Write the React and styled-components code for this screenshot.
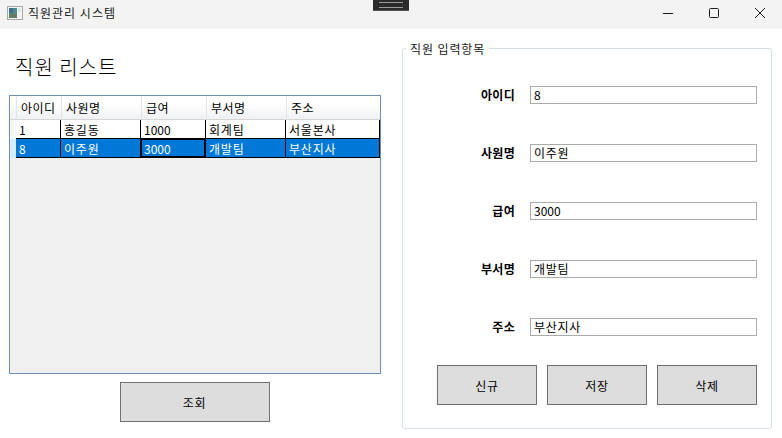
import React from "react";
import styled, { createGlobalStyle } from "styled-components";

const employees = [
  { id: "1", name: "홍길동", pay: "1000", dept: "회계팀", addr: "서울본사" },
  { id: "8", name: "이주원", pay: "3000", dept: "개발팀", addr: "부산지사" },
];
const columns = [
  { key: "id", label: "아이디", width: 45 },
  { key: "name", label: "사원명", width: 80 },
  { key: "pay", label: "급여", width: 65 },
  { key: "dept", label: "부서명", width: 80 },
  { key: "addr", label: "주소", width: 94 },
];
const selected = employees[1];
const formRows = [
  ["아이디", selected.id],
  ["사원명", selected.name],
  ["급여", selected.pay],
  ["부서명", selected.dept],
  ["주소", selected.addr],
];
const isNum = (v) => /^\d+$/.test(v);

const GlobalStyle = createGlobalStyle`
  html, body {
    margin: 0;
    padding: 0;
    background: #fff;
  }
  * {
    box-sizing: border-box;
  }
`;

const Win = styled.div`
  position: relative;
  width: 782px;
  height: 438px;
  overflow: hidden;
  background: #fff;
  color: #000;
  font-family: "Noto Sans CJK KR", "Noto Sans", sans-serif;
  font-size: 12px;
`;
const TitleBar = styled.div`
  display: flex;
  align-items: center;
  width: 783px;
  height: 29px;
  padding: 0 0 3px 7px;
  background: #f3f3f3;
`;
const AppIcon = styled.svg`
  width: 16px;
  height: 14px;
  margin-right: 5px;
`;
const TitleText = styled.span`
  flex: 1;
  font-size: 12px;
  line-height: 16px;
  letter-spacing: 1px;
  color: #1a1a1a;
`;
const WinButton = styled.div`
  display: flex;
  align-items: center;
  justify-content: center;
  width: 46px;
  height: 26px;
`;
const Notch = styled.div`
  position: absolute;
  left: 373px;
  top: 0;
  width: 36px;
  height: 11px;
  background: #2b2b2b;
  border-bottom: 1px solid #555;
  &::after {
    content: "";
    position: absolute;
    left: 6px;
    right: 6px;
    top: 2px;
    height: 4px;
    border-top: 1px solid #9a9a9a;
    border-bottom: 1px solid #9a9a9a;
  }
`;
const Body = styled.div`
  display: flex;
  padding: 19px 10px 9px 9px;
  height: 409px;
`;
const LeftPane = styled.div`
  display: flex;
  flex-direction: column;
  width: 372px;
  margin-right: 21px;
`;
const Heading = styled.h1`
  margin: 0 0 14px 6px;
  height: 33px;
  padding-top: 4px;
  font-size: 20px;
  line-height: 30px;
  font-weight: 300;
  letter-spacing: 1px;
`;
const Grid = styled.div`
  width: 372px;
  height: 279px;
  border: 1px solid #6d8fb4;
  background: #f0f0f0;
`;
const Row = styled.div`
  display: flex;
`;
const HeaderCorner = styled.div`
  width: 6px;
  height: 24px;
  background: linear-gradient(#fff, #f1f2f4);
  border-bottom: 1px solid #d5d5d5;
`;
const HeaderCell = styled.div`
  height: 24px;
  padding-left: 4px;
  line-height: 23px;
  letter-spacing: 0.5px;
  background: linear-gradient(#fff 30%, #f0f1f3);
  border-bottom: 1px solid #d5d5d5;
  border-left: 1px solid #e4e5e7;
`;
const RowHead = styled.div`
  width: 6px;
  height: 19px;
  background: ${(p) => (p.$active ? "#d9ebf9" : "#f5f6f8")};
`;
const Cell = styled.div`
  height: 19px;
  padding-left: 3px;
  line-height: 19px;
  white-space: nowrap;
  letter-spacing: ${(p) => (p.$num ? "0" : "0.8px")};
  background: ${(p) => (p.$selected ? "#0078d7" : "#fff")};
  color: ${(p) => (p.$selected ? "#fff" : "#000")};
  border-bottom: 1px solid #000;
  border-right: 1px solid #000;
  box-shadow: ${(p) => (p.$current ? "inset 0 0 0 1px #000" : "none")};
`;
const ActionButton = styled.button`
  display: block;
  flex: none;
  width: ${(p) => p.$w}px;
  height: 40px;
  padding: 0;
  background: #dddddd;
  border: 1px solid #707070;
  color: #000;
  font-family: inherit;
  font-size: 12px;
  letter-spacing: 0.6px;
`;
const QueryWrap = styled.div`
  display: flex;
  justify-content: center;
  margin-top: 8px;
  padding-right: 1px;
`;
const GroupBox = styled.div`
  position: relative;
  width: 370px;
  height: 381px;
  padding: 37px 13px 0 34px;
  border: 1px solid #d5dfe5;
  border-radius: 3px;
`;
const Legend = styled.div`
  position: absolute;
  left: 3px;
  top: -8px;
  padding: 0 4px;
  background: #fff;
  line-height: 15px;
  letter-spacing: 0.9px;
  color: #1a1a1a;
`;
const FormRow = styled.div`
  display: flex;
  align-items: center;
  height: 18px;
  margin-bottom: 40px;
`;
const Label = styled.label`
  width: 78px;
  margin-right: 15px;
  text-align: right;
  font-weight: 700;
  line-height: 18px;
  letter-spacing: 0.3px;
`;
const Input = styled.div`
  width: 227px;
  height: 18px;
  padding-left: 3px;
  border: 1px solid #ababab;
  line-height: 15px;
  letter-spacing: ${(p) => (p.$num ? "0" : "0.7px")};
`;
const ButtonRow = styled.div`
  display: flex;
  gap: 10px;
  margin-top: -11px;
`;

const App = () => {
  return (
    <Win>
      <GlobalStyle />
      <TitleBar>
        <AppIcon viewBox="0 0 16 14">
          <rect x="0.5" y="0.5" width="15" height="13" fill="#f4f4f4" stroke="#a8a8a8" />
          <rect x="2" y="2" width="8" height="10" fill="#4f8a8b" />
          <rect x="2" y="2" width="4" height="5" fill="#3f6f8f" />
          <rect x="2" y="8" width="8" height="4" fill="#5f7f5f" />
          <rect x="11" y="2" width="3" height="4" fill="#d8e8ec" />
        </AppIcon>
        <TitleText>직원관리 시스템</TitleText>
        <WinButton>
          <svg width="10" height="10" viewBox="0 0 10 10">
            <path d="M0 5.5h10" stroke="#1a1a1a" />
          </svg>
        </WinButton>
        <WinButton>
          <svg width="10" height="10" viewBox="0 0 10 10">
            <rect x="0.5" y="0.5" width="9" height="9" rx="1" fill="none" stroke="#1a1a1a" />
          </svg>
        </WinButton>
        <WinButton>
          <svg width="10" height="10" viewBox="0 0 10 10">
            <path d="M0 0l10 10M10 0L0 10" stroke="#1a1a1a" />
          </svg>
        </WinButton>
      </TitleBar>
      <Notch />
      <Body>
        <LeftPane>
          <Heading>직원 리스트</Heading>
          <Grid>
            <Row>
              <HeaderCorner />
              {columns.map((c) => (
                <HeaderCell key={c.key} style={{ width: c.width }}>
                  {c.label}
                </HeaderCell>
              ))}
            </Row>
            {employees.map((emp) => {
              const isSel = emp.id === selected.id;
              return (
                <Row key={emp.id}>
                  <RowHead $active={isSel} />
                  {columns.map((c) => (
                    <Cell
                      key={c.key}
                      style={{ width: c.width }}
                      $selected={isSel}
                      $current={isSel && c.key === "pay"}
                      $num={isNum(emp[c.key])}
                    >
                      {emp[c.key]}
                    </Cell>
                  ))}
                </Row>
              );
            })}
          </Grid>
          <QueryWrap>
            <ActionButton $w={150}>조회</ActionButton>
          </QueryWrap>
        </LeftPane>
        <GroupBox>
          <Legend>직원 입력항목</Legend>
          {formRows.map(([label, value]) => (
            <FormRow key={label}>
              <Label>{label}</Label>
              <Input $num={isNum(value)}>{value}</Input>
            </FormRow>
          ))}
          <ButtonRow>
            <ActionButton $w={100}>신규</ActionButton>
            <ActionButton $w={100}>저장</ActionButton>
            <ActionButton $w={100}>삭제</ActionButton>
          </ButtonRow>
        </GroupBox>
      </Body>
    </Win>
  );
};

export default App;
